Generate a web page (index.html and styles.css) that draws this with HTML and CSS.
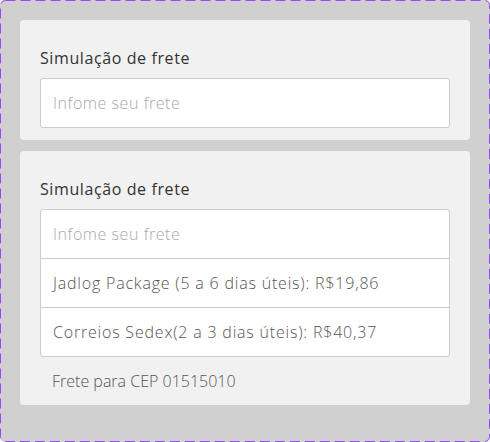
FILE: index.html
```html
<!DOCTYPE html>
<html lang="pt-BR">
<head>
<meta charset="utf-8">
<title>Simulação de frete</title>
<link rel="stylesheet" href="styles.css">
</head>
<body>
<div class="frame">
  <svg class="frame-border" width="490" height="442" viewBox="0 0 490 442" aria-hidden="true">
    <rect x="0.5" y="0.5" width="489" height="441" rx="5" ry="5" fill="none" stroke="#9747ff" stroke-width="1" stroke-dasharray="10 5"/>
  </svg>
  <section class="card">
    <h2 class="card-title">Simulação de frete</h2>
    <div class="field">
      <input class="field-input" type="text" placeholder="Infome seu frete">
    </div>
  </section>
  <section class="card">
    <h2 class="card-title">Simulação de frete</h2>
    <div class="field">
      <input class="field-input" type="text" placeholder="Infome seu frete">
      <div class="option">Jadlog Package (5 a 6 dias úteis): R$19,86</div>
      <div class="option">Correios Sedex(2 a 3 dias úteis): R$40,37</div>
    </div>
    <p class="card-note">Frete para CEP 01515010</p>
  </section>
</div>
</body>
</html>
```
FILE: styles.css
```css
* { box-sizing: border-box; }
html, body { margin: 0; padding: 0; }
body {
  font-family: "Open Sans", "Noto Sans", sans-serif;
  background: #ffffff;
}
.frame {
  position: relative;
  width: 490px;
  height: 442px;
  background: #d0d0d0;
  border-radius: 5px;
  padding: 20px;
  display: flex;
  flex-direction: column;
  gap: 11px;
}
.frame-border {
  position: absolute;
  left: 0;
  top: 0;
  pointer-events: none;
}
.card {
  background: #f1f1f1;
  border-radius: 4px;
  padding: 26px 20px 12px;
  display: flex;
  flex-direction: column;
}
.card-title {
  margin: 0 0 8px;
  font-size: 16px;
  line-height: 24px;
  font-weight: 400;
  letter-spacing: 0.6px;
  color: #333333;
}
.field {
  background: #ffffff;
  border: 1px solid #cccccc;
  border-radius: 3px;
  display: flex;
  flex-direction: column;
}
.field-input {
  height: 48px;
  border: 0;
  background: transparent;
  padding: 0 12px;
  font-family: inherit;
  font-size: 16px;
  font-weight: 300;
  letter-spacing: 0.55px;
  color: #555555;
  outline: none;
}
.field-input::placeholder {
  color: #a9a9a9;
}
.option {
  height: 49px;
  border-top: 1px solid #cccccc;
  padding: 0 12px;
  display: flex;
  align-items: center;
  font-size: 16px;
  font-weight: 300;
  letter-spacing: 0.8px;
  color: #555555;
}
.card-note {
  margin: 12px 0 0;
  padding: 0 12px;
  font-size: 16px;
  line-height: 24px;
  font-weight: 300;
  color: #555555;
}
```
